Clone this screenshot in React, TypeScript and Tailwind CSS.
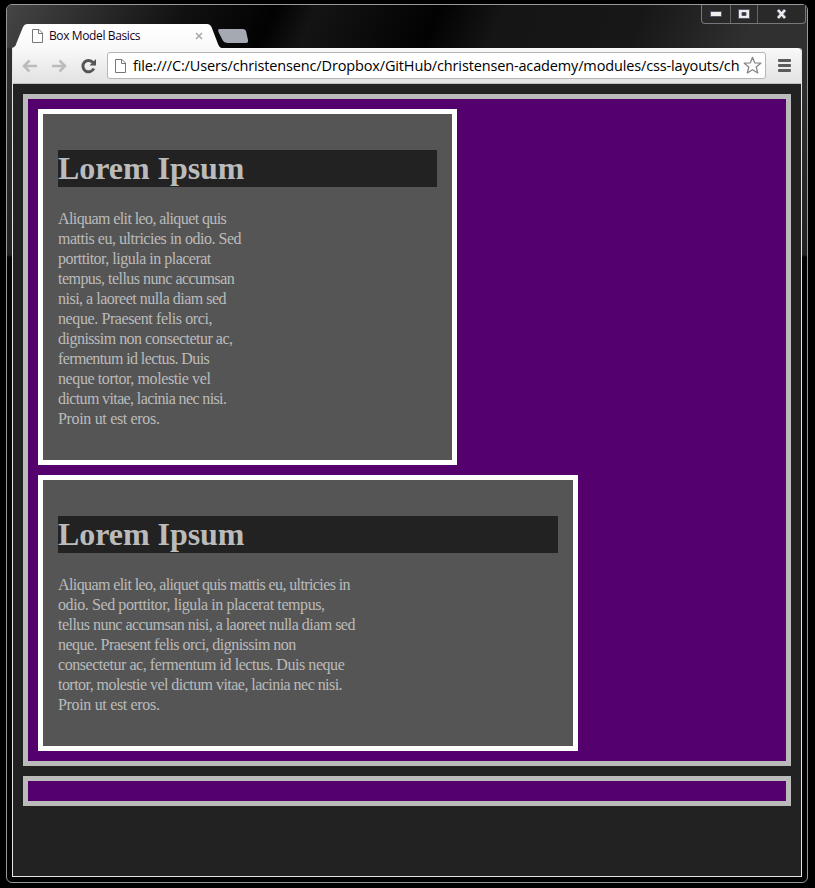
import React from 'react';

type Line = [text: string, tracking: string];

const first: Line[] = [
  ['Aliquam elit leo, aliquet quis', 'tracking-[-0.6px]'], ['mattis eu, ultricies in odio. Sed', 'tracking-[-0.47px]'],
  ['porttitor, ligula in placerat', 'tracking-[-0.5px]'], ['tempus, tellus nunc accumsan', 'tracking-[-0.53px]'],
  ['nisi, a laoreet nulla diam sed', 'tracking-[-0.5px]'], ['neque. Praesent felis orci,', 'tracking-[-0.4px]'],
  ['dignissim non consectetur ac,', 'tracking-[-0.51px]'], ['fermentum id lectus. Duis', 'tracking-[-0.6px]'],
  ['neque tortor, molestie vel', 'tracking-[-0.4px]'], ['dictum vitae, lacinia nec nisi.', 'tracking-[-0.62px]'],
  ['Proin ut est eros.', 'tracking-[-0.33px]'],
];
const second: Line[] = [
  ['Aliquam elit leo, aliquet quis mattis eu, ultricies in', 'tracking-[-0.6px]'],
  ['odio. Sed porttitor, ligula in placerat tempus,', 'tracking-[-0.41px]'],
  ['tellus nunc accumsan nisi, a laoreet nulla diam sed', 'tracking-[-0.53px]'],
  ['neque. Praesent felis orci, dignissim non', 'tracking-[-0.52px]'],
  ['consectetur ac, fermentum id lectus. Duis neque', 'tracking-[-0.45px]'],
  ['tortor, molestie vel dictum vitae, lacinia nec nisi.', 'tracking-[-0.54px]'],
  ['Proin ut est eros.', 'tracking-[-0.33px]'],
];

function PageIcon({ className }: { className: string }) {
  return (
    <svg className={className} width="11" height="14" viewBox="0 0 11 14" fill="#fff" stroke="#777" strokeWidth="1">
      <path d="M.5.5h6.500l3.500 3.500v9.500H.5z" />
      <path d="M6.500.5v4h4" fill="none" />
    </svg>
  );
}

function Card({ lines, className }: { lines: Line[]; className: string }) {
  return (
    <section className={`border-5 border-white bg-[#555] px-[15px] pt-[36px] ${className}`}>
      <h1 className="h-[37px] bg-[#222] text-[32px] leading-[37px] font-bold tracking-[-0.05px]">Lorem Ipsum</h1>
      <p className="mt-[22px] text-[16px] leading-[20px]">
        {lines.map(([text, tracking]) => <span key={text} className={`block whitespace-nowrap ${tracking}`}>{text}</span>)}
      </p>
    </section>
  );
}

function Tab() {
  return (
    <div className="relative h-[24px] w-[240px]">
      <svg className="absolute inset-0" width="240" height="24" viewBox="0 0 240 24">
        <defs>
          <linearGradient id="tab" x1="0" y1="0" x2="0" y2="1"><stop stopColor="#fff" /><stop offset="1" stopColor="#f9f9f9" /></linearGradient>
        </defs>
        <path d="M0 24C3 23 3.500 22 4.500 19L11 3Q12.500 0 15 0H195Q198 0 199.500 3L206 20Q207.500 24 210 24Z" fill="url(#tab)" />
        <path d="M207.500 5H231Q233 5 234 7L236 16Q236.500 19 234 19H216Q212 19 210.500 16L206.500 8Q205.500 5 207.500 5Z" fill="#a4a9b2" />
      </svg>
      <PageIcon className="absolute left-[20px] top-[5px]" />
      <span className="absolute left-[37px] top-[4px] whitespace-nowrap font-['Open_Sans',sans-serif] text-[12px] leading-[16px] tracking-[-0.38px] text-[#18051c]">Box Model Basics</span>
      <svg className="absolute left-[183px] top-[8px]" width="8" height="8" stroke="#aaa" strokeWidth="1.600"><path d="m1 1 6 6m0-6L1 7" /></svg>
    </div>
  );
}

function WindowButtons() {
  return (
    <div className="mr-px flex h-[19px] w-[105px] rounded-b-[4px] border border-t-0 border-[#777] bg-[#292929]">
      <div className="flex w-[29px] items-center justify-center border-r border-[#666]">
        <svg width="12" height="6"><path d="M.5.5h11v5H.5z" fill="#eee" stroke="#555568" /></svg>
      </div>
      <div className="flex w-[27px] items-center justify-center border-r border-[#666] pb-[1px]">
        <svg width="12" height="10"><path d="M.5.500h11v9H.5z" fill="#eee" stroke="#555568" /><path d="M4 3.500h4v3H4z" fill="#333" stroke="#555568" /></svg>
      </div>
      <div className="flex flex-1 items-center justify-center pb-[1px]">
        <svg width="11" height="10"><path d="m2 1 7 8M9 1 2 9" stroke="#555568" strokeWidth="4" /><path d="m2 1 7 8M9 1 2 9" stroke="#eee" strokeWidth="2.400" /></svg>
      </div>
    </div>
  );
}

function Toolbar() {
  return (
    <div className="flex h-[36px] items-center rounded-tr-[3px] border-b border-[#c0c0c0] bg-linear-to-b from-[#f9f9f9] to-[#e2e2e2]">
      <svg className="ml-[9px] shrink-0" width="16" height="14" fill="none" stroke="#bcbcbc" strokeWidth="2.600"><path d="M1.500 7H15M7.500 1.500 2 7l5.500 5.500" /></svg>
      <svg className="ml-[14px] shrink-0" width="16" height="14" fill="none" stroke="#bcbcbc" strokeWidth="2.600"><path d="M0 7h13.500M7.500 1.500 13 7l-5.500 5.500" /></svg>
      <svg className="ml-[12px] shrink-0" width="17" height="16" fill="none"><path d="M13 4.500A5.700 5.700 0 1 0 13.800 10.500" stroke="#555" strokeWidth="3" /><path d="M16 1v6.500H9.500z" fill="#555" /></svg>
      <div className="ml-[10px] flex h-[27px] w-[659px] shrink-0 items-center rounded-[3px] border border-[#b5b5b5] bg-white">
        <PageIcon className="ml-[7px] shrink-0" />
        <div className="ml-[7px] w-[612px] shrink-0 whitespace-nowrap font-['Open_Sans',sans-serif] text-[14.5px] leading-[24px] tracking-[-0.145px] text-black">
          file:///C:/Users/christensenc/Dropbox/GitHub/christensen-academy/modules/css-layouts/ch
        </div>
        <svg className="-ml-[2px] shrink-0" width="19" height="19" viewBox="0 0 19 19" fill="#fff" stroke="#888" strokeWidth="1.300" strokeLinejoin="round"><path d="M9.500 1.300 11.700 6.800 17.800 7.200 13.200 11 14.700 17 9.500 13.700 4.300 17 5.800 11 1.200 7.200 7.300 6.800Z" /></svg>
      </div>
      <svg className="ml-[12px] shrink-0" width="13" height="14" fill="#5b5b5b"><rect width="13" height="3" rx="1" /><rect y="5" width="13" height="3" rx="1" /><rect y="10" width="13" height="3" rx="1" /></svg>
    </div>
  );
}

export default function App() {
  return (
    <main className="h-[888px] w-[815px] overflow-hidden bg-black pl-[6px] pt-[4px]">
      <div className="h-[879px] w-[802px] rounded-[6px] border border-[#999] bg-[linear-gradient(#333_0px,#222_250px,#030303_252px)] px-[5px]">
        <div className="-mx-[5px] flex h-[43px] items-start justify-between rounded-t-[5px] bg-[linear-gradient(115deg,#454545_0%,#292929_12%,#111_22%,#020202_33%,#141414_38%,#020202_53%,#151515_61%,#171717_78%,#303030_92%)] pl-[5px]">
          <div className="pt-[19px]"><Tab /></div>
          <WindowButtons />
        </div>
        <div className="h-[829px] rounded-tr-[3px] border border-t-0 border-[#e5e5e5] bg-[#222]">
          <Toolbar />
          <div className="px-[10px] pt-[10px] font-['Liberation_Serif',serif] text-[#bbb]">
            <div className="h-[672px] border-5 border-[#bbb] bg-[#54006d] p-[10px]">
              <Card lines={first} className="h-[356px] w-[419px]" />
              <Card lines={second} className="mt-[10px] h-[276px] w-[540px]" />
            </div>
            <div className="mt-[10px] h-[30px] border-5 border-[#bbb] bg-[#54006d]" />
          </div>
        </div>
      </div>
    </main>
  );
}
